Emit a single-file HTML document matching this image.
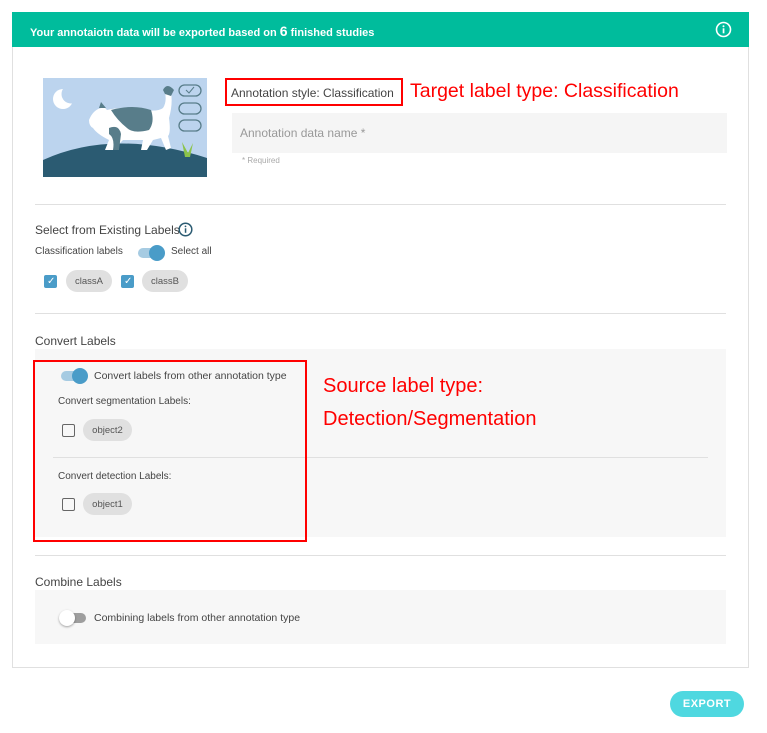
<!DOCTYPE html>
<html><head><meta charset="utf-8"><style>
*{margin:0;padding:0;box-sizing:border-box}
body{width:767px;height:733px;background:#fff;font-family:"Liberation Sans",sans-serif;position:relative;overflow:hidden;color:#444}
.a{position:absolute}
.t{font-size:11px;color:#444;white-space:nowrap}
.chip{position:absolute;height:22px;border-radius:11px;background:#e0e0e0;font-size:9.5px;color:#555;display:flex;align-items:center;justify-content:center}
.cb{position:absolute;width:13px;height:13px;border-radius:2px}
.cbon{background:#4a9cc8}
.cboff{border:1.6px solid #666;background:transparent}
.red{color:#ff0000;font-family:"Liberation Sans",sans-serif;font-size:19.5px;white-space:nowrap}
.hr{position:absolute;height:1px;background:#e0e0e0}
</style></head><body>
<div class="a" style="left:12px;top:12px;width:737px;height:656px;border:1px solid #e0e0e0"></div>
<div class="a" style="left:12px;top:12px;width:737px;height:35px;background:#00bc9c"></div>
<div class="a" style="left:30px;top:23px;font-size:11px;color:#fff;font-weight:bold;white-space:nowrap">Your annotaiotn data will be exported based on <span style="font-size:14px">6</span> finished studies</div>
<svg class="a" style="left:715px;top:21px" width="17" height="17" viewBox="0 0 17 17"><circle cx="8.5" cy="8.5" r="7" fill="none" stroke="#fff" stroke-width="1.6"/><rect x="7.7" y="7.3" width="1.7" height="5" fill="#fff"/><circle cx="8.5" cy="5.2" r="1" fill="#fff"/></svg>

<svg class="a" style="left:43px;top:78px" width="164" height="99" viewBox="0 0 164 99">
<rect width="164" height="99" fill="#bcd4ee"/>
<circle cx="20" cy="21" r="10" fill="#fff"/><circle cx="28" cy="16" r="9.5" fill="#bcd4ee"/>
<path d="M0 82 Q 70 50 164 80 L164 99 L0 99Z" fill="#2b5b72"/>
<path d="M46 42 Q50 32 58 30 L60 28 L64 32 Q80 28 100 32 Q115 34 120 30 Q124 24 122 14 L128 14 Q130 26 126 40 Q128 55 125 58 L128 70 L123 72 L118 60 L110 62 L104 72 L98 72 L100 62 L80 62 L70 72 L62 72 L66 62 Q54 56 50 50 Q46 48 46 42Z" fill="#fff"/>
<path d="M68 32 Q90 26 108 32 Q112 44 106 52 Q90 56 84 50 Q74 42 68 32Z" fill="#587d8a"/>
<path d="M66 50 Q76 46 78 56 L76 72 L70 72 Q72 60 66 56Z" fill="#587d8a"/>
<path d="M56 30 L58 24 L63 30Z" fill="#587d8a"/>
<path d="M120 12 Q124 4 131 12 L128 18 L122 16Z" fill="#587d8a"/>
<path d="M142 79 L139 64 L145 75 L150 65 L147 79Z" fill="#8bc34a"/>
<rect x="136" y="7" width="22" height="11" rx="5.5" fill="none" stroke="#587d8a" stroke-width="1.3"/>
<path d="M143 12 L146 15 L151 9" fill="none" stroke="#587d8a" stroke-width="1"/>
<rect x="136" y="25" width="22" height="11" rx="5.5" fill="none" stroke="#587d8a" stroke-width="1.3"/>
<rect x="136" y="42" width="22" height="11" rx="5.5" fill="none" stroke="#587d8a" stroke-width="1.3"/>
</svg>

<div class="a" style="left:225px;top:78px;width:178px;height:28px;border:2px solid #ff0000"></div>
<div class="a t" style="left:231px;top:86px;font-size:12px">Annotation style: Classification</div>
<div class="a red" style="left:410px;top:80px">Target label type: Classification</div>
<div class="a" style="left:232px;top:113px;width:495px;height:40px;background:#f5f5f5"></div>
<div class="a" style="left:240px;top:126px;font-size:12px;color:#999">Annotation data name *</div>
<div class="a" style="left:242px;top:156px;font-size:8px;color:#aaa">* Required</div>

<div class="hr" style="left:35px;top:204px;width:691px"></div>
<div class="a" style="left:35px;top:223px;font-size:12px;color:#444;white-space:nowrap">Select from Existing Labels</div>
<svg class="a" style="left:178px;top:222px" width="15" height="15" viewBox="0 0 15 15"><circle cx="7.5" cy="7.5" r="6.3" fill="none" stroke="#2b5b72" stroke-width="1.5"/><rect x="6.8" y="6.3" width="1.5" height="4.5" fill="#2b5b72"/><circle cx="7.5" cy="4.4" r=".9" fill="#2b5b72"/></svg>
<div class="a t" style="left:35px;top:246px;font-size:10px">Classification labels</div>
<div class="a" style="left:138px;top:248px;width:26px;height:10px;border-radius:5px;background:#a6cbe2"></div>
<div class="a" style="left:149px;top:245px;width:16px;height:16px;border-radius:8px;background:#4a9cc8"></div>
<div class="a t" style="left:171px;top:246px;font-size:10px">Select all</div>
<div class="cb cbon" style="left:44px;top:275px"></div><div class="a" style="left:47px;top:276px;color:#fff;font-size:10px">✓</div>
<div class="chip" style="left:66px;top:270px;width:46px">classA</div>
<div class="cb cbon" style="left:121px;top:275px"></div><div class="a" style="left:124px;top:276px;color:#fff;font-size:10px">✓</div>
<div class="chip" style="left:142px;top:270px;width:46px">classB</div>

<div class="hr" style="left:35px;top:313px;width:691px"></div>
<div class="a" style="left:35px;top:334px;font-size:12px;color:#444">Convert Labels</div>
<div class="a" style="left:35px;top:349px;width:691px;height:188px;background:#f7f7f7"></div>
<div class="hr" style="left:53px;top:457px;width:655px"></div>
<div class="a" style="left:61px;top:371px;width:26px;height:10px;border-radius:5px;background:#a6cbe2"></div>
<div class="a" style="left:72px;top:368px;width:16px;height:16px;border-radius:8px;background:#4a9cc8"></div>
<div class="a t" style="left:94px;top:370px;font-size:10.5px">Convert labels from other annotation type</div>
<div class="a t" style="left:58px;top:396px;font-size:10px">Convert segmentation Labels:</div>
<div class="cb cboff" style="left:62px;top:424px"></div>
<div class="chip" style="left:83px;top:419px;width:49px">object2</div>
<div class="a t" style="left:58px;top:471px;font-size:10px">Convert detection Labels:</div>
<div class="cb cboff" style="left:62px;top:498px"></div>
<div class="chip" style="left:83px;top:493px;width:49px">object1</div>
<div class="a" style="left:33px;top:360px;width:274px;height:182px;border:2px solid #ff0000"></div>
<div class="a red" style="left:323px;top:375px;font-size:20px">Source label type:</div>
<div class="a red" style="left:323px;top:408px;font-size:20px">Detection/Segmentation</div>

<div class="hr" style="left:35px;top:555px;width:691px"></div>
<div class="a" style="left:35px;top:575px;font-size:12px;color:#444">Combine Labels</div>
<div class="a" style="left:35px;top:590px;width:691px;height:54px;background:#f7f7f7"></div>
<div class="a" style="left:62px;top:613px;width:24px;height:10px;border-radius:5px;background:#9e9e9e"></div>
<div class="a" style="left:59px;top:610px;width:16px;height:16px;border-radius:8px;background:#fff;box-shadow:0 1px 2px rgba(0,0,0,.35)"></div>
<div class="a t" style="left:94px;top:612px;font-size:10.5px">Combining labels from other annotation type</div>

<div class="a" style="left:670px;top:691px;width:74px;height:26px;border-radius:13px;background:#4fd8e0;color:#fff;font-weight:bold;font-size:11px;line-height:26px;text-align:center;letter-spacing:.5px">EXPORT</div>
</body></html>
